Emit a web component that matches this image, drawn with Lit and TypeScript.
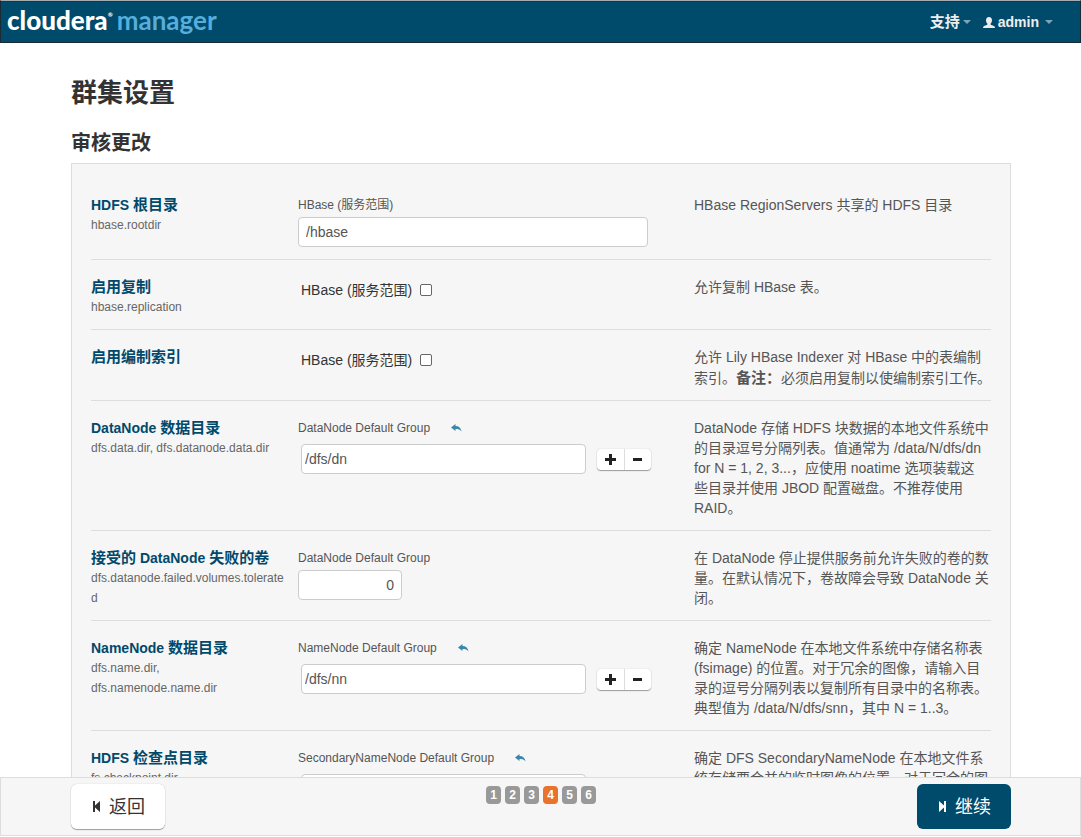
import { LitElement, html, css, nothing, svg } from "lit";
import { customElement, property } from "lit/decorators.js";

interface Setting {
  id: string;
  title: string;
  keys?: string;
  group: string;
  kind: "text" | "check" | "list" | "number";
  value?: string;
  description: unknown;
}

const settings: Setting[] = [
  {
    id: "rootdir",
    title: "HDFS 根目录",
    keys: "hbase.rootdir",
    group: "HBase (服务范围)",
    kind: "text",
    value: "/hbase",
    description: "HBase RegionServers 共享的 HDFS 目录",
  },
  {
    id: "replication",
    title: "启用复制",
    keys: "hbase.replication",
    group: "HBase (服务范围)",
    kind: "check",
    description: "允许复制 HBase 表。",
  },
  {
    id: "indexing",
    title: "启用编制索引",
    group: "HBase (服务范围)",
    kind: "check",
    description: html`允许 Lily HBase Indexer 对 HBase 中的表编制索引。<strong>备注：</strong>必须启用复制以使编制索引工作。`,
  },
  {
    id: "datanode-dir",
    title: "DataNode 数据目录",
    keys: "dfs.data.dir, dfs.datanode.data.dir",
    group: "DataNode Default Group",
    kind: "list",
    value: "/dfs/dn",
    description: html`DataNode 存储 HDFS 块数据的本地文件系统中的目录逗号分隔列表。值通常为 /data/N/dfs/dn for N = 1, 2, 3...，应使用 noatime 选项装载这<br />些目录并使用 JBOD 配置磁盘。不推荐使用 RAID。`,
  },
  {
    id: "failed-volumes",
    title: "接受的 DataNode 失败的卷",
    keys: "dfs.datanode.failed.volumes.tolerated",
    group: "DataNode Default Group",
    kind: "number",
    value: "0",
    description:
      "在 DataNode 停止提供服务前允许失败的卷的数量。在默认情况下，卷故障会导致 DataNode 关闭。",
  },
  {
    id: "namenode-dir",
    title: "NameNode 数据目录",
    keys: "dfs.name.dir, dfs.namenode.name.dir",
    group: "NameNode Default Group",
    kind: "list",
    value: "/dfs/nn",
    description:
      "确定 NameNode 在本地文件系统中存储名称表 (fsimage) 的位置。对于冗余的图像，请输入目录的逗号分隔列表以复制所有目录中的名称表。典型值为 /data/N/dfs/snn，其中 N = 1..3。",
  },
  {
    id: "checkpoint-dir",
    title: "HDFS 检查点目录",
    keys: "fs.checkpoint.dir",
    group: "SecondaryNameNode Default Group",
    kind: "list",
    value: "",
    description:
      "确定 DFS SecondaryNameNode 在本地文件系统存储要合并的临时图像的位置。对于冗余的图像，请输入目录的逗号分隔列表。",
  },
];

const shapes = {
  reply: svg`<path d="M0 3.5 4.5 0v2C8 2 10 4 10.5 7.5 9 5.6 7.5 5 4.5 5v2z"/>`,
  plus: svg`<path d="M4 0h3v4h4v3H7v4H4V7H0V4h4z"/>`,
  minus: svg`<path d="M1 4h9v3H1z"/>`,
  back: svg`<path d="M0 0h2v4.600L7 0v11L2 6.400V11H0z"/>`,
  forward: svg`<path d="M7 0H5v4.600L0 0v11l5-4.600V11h2z"/>`,
  user: svg`<path d="M6 0c1.900 0 3 1.300 3 3.200C9 4.800 8.300 6 7.500 6.700c0 .9.300 1.200 1.500 1.600C11 9 12 9.300 12 11H0c0-1.700 1-2 3-2.700 1.200-.4 1.500-.7 1.500-1.600C3.700 6 3 4.800 3 3.200 3 1.300 4.100 0 6 0z"/>`,
};

const icon = (name: keyof typeof shapes, width: number, height: number) =>
  html`<svg
    width=${width}
    height=${height}
    viewBox="0 0 ${width} ${height}"
    fill="currentColor"
    aria-hidden="true"
  >
    ${shapes[name]}
  </svg>`;

const base = css`
  * {
    box-sizing: border-box;
  }
  svg {
    display: block;
    flex: none;
  }
  a {
    text-decoration: none;
  }
  input,
  button {
    font: inherit;
    color: inherit;
    margin: 0;
  }
`;

@customElement("setting-row")
export class SettingRow extends LitElement {
  @property({ attribute: false }) setting!: Setting;

  static styles = [
    base,
    css`
      :host {
        display: grid;
        grid-template-columns: 23fr 44fr 33fr;
        padding: 17px 0 12px;
        border-bottom: 1px solid #ddd;
      }
      .name {
        padding-right: 10px;
        min-width: 0;
      }
      h3 {
        margin: 0;
        font-size: 14px;
        line-height: 20px;
        color: #00496b;
      }
      .han,
      strong {
        font-size: 15px;
      }
      strong {
        line-height: 21px;
      }
      .keys {
        margin: 0;
        font-size: 12px;
        line-height: 20px;
        color: #666;
        overflow-wrap: anywhere;
      }
      .group {
        display: flex;
        align-items: center;
        gap: 21px;
        height: 20px;
        font-size: 12px;
      }
      .revert {
        color: #3a87ad;
      }
      .box {
        display: block;
        height: 30px;
        padding: 4px 7px;
        border: 1px solid #ccc;
        border-radius: 4px;
        background: #fff;
        line-height: 20px;
      }
      .text {
        width: 350px;
        max-width: 100%;
        margin-top: 2px;
      }
      .number {
        width: 104px;
        margin-top: 2px;
        text-align: right;
      }
      .list {
        width: 285px;
        padding: 4px 3px;
      }
      .entry {
        display: flex;
        align-items: center;
        gap: 11px;
        padding: 6px 3px 0;
      }
      .pair {
        display: flex;
        border-radius: 4px;
        box-shadow: 0 0 1px #bbb, 0 1px 1px #999;
        background: #fff;
      }
      .pair button {
        display: grid;
        place-items: center;
        width: 27px;
        height: 21px;
        padding: 0 1px 0 0;
        border: 0;
        background: none;
        color: #222;
      }
      .pair button + button {
        border-left: 1px solid #ddd;
      }
      .check {
        display: flex;
        align-items: center;
        gap: 8px;
        padding: 3px 3px 0;
        color: #333;
      }
      .check input {
        width: 12px;
        height: 12px;
        appearance: none;
        border: 1px solid #666;
        border-radius: 2px;
        background: #fff;
      }
      .description {
        margin: 0;
      }
    `,
  ];

  private heading(title: string) {
    return title
      .split(/([\u4e00-\u9fff]+)/)
      .filter(Boolean)
      .map((part) =>
        /[\u4e00-\u9fff]/.test(part) ? html`<span class="han">${part}</span>` : part
      );
  }

  private field(s: Setting) {
    if (s.kind === "check") {
      return html`<label class="check">${s.group}<input type="checkbox" /></label>`;
    }
    const label = html`<div class="group">
      <label for=${s.id}>${s.group}</label>
      ${s.kind === "list"
        ? html`<a class="revert" href="#" aria-label="重置">${icon("reply", 11, 8)}</a>`
        : nothing}
    </div>`;
    if (s.kind === "list") {
      return html`${label}
        <div class="entry">
          <input class="box list" id=${s.id} type="text" .value=${s.value ?? ""} />
          <div class="pair">
            <button type="button" aria-label="添加">${icon("plus", 11, 11)}</button>
            <button type="button" aria-label="删除">${icon("minus", 11, 11)}</button>
          </div>
        </div>`;
    }
    return html`${label}<input
        class="box ${s.kind}"
        id=${s.id}
        type="text"
        .value=${s.value ?? ""}
      />`;
  }

  render() {
    const s = this.setting;
    return html`
      <div class="name">
        <h3>${this.heading(s.title)}</h3>
        ${s.keys ? html`<p class="keys">${s.keys}</p>` : nothing}
      </div>
      <div>${this.field(s)}</div>
      <p class="description">${s.description}</p>
    `;
  }
}

@customElement("app-root")
export class AppRoot extends LitElement {
  static styles = [
    base,
    css`
      :host {
        display: flex;
        flex-direction: column;
        height: 100vh;
        background: #fff;
        color: #555;
        font: 14px/20px "Liberation Sans", "Noto Sans CJK SC", sans-serif;
      }
      header {
        flex: none;
        display: flex;
        align-items: flex-start;
        justify-content: space-between;
        height: 43px;
        padding: 0 27px 0 6px;
        border: 1px solid #1b2a33;
        border-top-color: #a5abae;
        background: #004a6b;
        box-shadow: inset 0 1px #12384a;
      }
      .brand {
        display: flex;
        font: 900 26px/38px Lato, sans-serif;
        color: #fff;
      }
      .mark {
        width: 9px;
        font-size: 6px;
        line-height: 28px;
      }
      .product {
        font-weight: 700;
        color: #55aedb;
      }
      nav {
        display: flex;
        gap: 12px;
        padding-top: 11px;
      }
      nav a {
        display: flex;
        align-items: center;
        gap: 3px;
        font-weight: bold;
        color: #eee;
      }
      .zh {
        font-size: 15px;
      }
      .caret {
        border: 4px solid transparent;
        border-top-color: #7fa5b5;
        border-bottom: 0;
      }
      .admin .caret {
        margin-left: 3px;
      }
      main {
        flex: 1;
        min-height: 0;
        padding-left: 1px;
        overflow-y: auto;
        scrollbar-width: none;
      }
      .container {
        width: 940px;
        max-width: 100%;
        margin: 0 auto;
      }
      h1,
      h2 {
        margin: 0;
        color: #333;
      }
      h1 {
        padding-top: 30px;
        font-size: 26px;
        line-height: 40px;
      }
      h2 {
        padding-top: 10px;
        font-size: 20px;
        line-height: 40px;
      }
      .panel {
        padding: 14px 19px;
        border: 1px solid #ddd;
        background: #f6f6f6;
      }
      footer {
        flex: none;
        height: 59px;
        margin-bottom: 1px;
        padding: 6px 0 0 1px;
        border: 1px solid #ddd;
        background: #f6f6f6;
      }
      .bar {
        display: grid;
        grid-template-columns: 1fr auto 1fr;
        align-items: start;
      }
      .step {
        display: flex;
        align-items: center;
        justify-content: center;
        gap: 8px;
        height: 45px;
        padding: 0 20px 0 22px;
        border: 0;
        border-radius: 6px;
        font-size: 18px;
        background: #fff;
        color: #333;
        box-shadow: 0 0 1px #bbb, 0 1px 1px #999;
      }
      .back {
        justify-self: start;
      }
      .next {
        justify-self: end;
        background: #004a6b;
        color: #fff;
        box-shadow: none;
      }
      ol {
        display: flex;
        gap: 4px;
        margin: 2px 0 0;
        padding: 0;
        list-style: none;
      }
      li {
        width: 15px;
        border-radius: 4px;
        background: #999;
        color: #fff;
        font-size: 12px;
        font-weight: bold;
        line-height: 18px;
        text-align: center;
      }
      .current {
        background: #e9722c;
      }
    `,
  ];

  render() {
    return html`
      <header>
        <div class="brand"><span>cloudera</span><span class="mark">®</span><span class="product">manager</span></div>
        <nav>
          <a href="#"><span class="zh">支持</span><span class="caret"></span></a>
          <a class="admin" href="#">${icon("user", 12, 11)}admin<span class="caret"></span></a>
        </nav>
      </header>
      <main lang="zh-CN">
        <div class="container">
          <h1>群集设置</h1>
          <h2>审核更改</h2>
          <section class="panel">
            ${settings.map((s) => html`<setting-row .setting=${s}></setting-row>`)}
          </section>
        </div>
      </main>
      <footer>
        <div class="container bar">
          <button class="step back" type="button">${icon("back", 8, 11)}返回</button>
          <ol>
            ${[1, 2, 3, 4, 5, 6].map((n) => html`<li class=${n === 4 ? "current" : ""}>${n}</li>`)}
          </ol>
          <button class="step next" type="button">${icon("forward", 8, 11)}继续</button>
        </div>
      </footer>
    `;
  }
}
